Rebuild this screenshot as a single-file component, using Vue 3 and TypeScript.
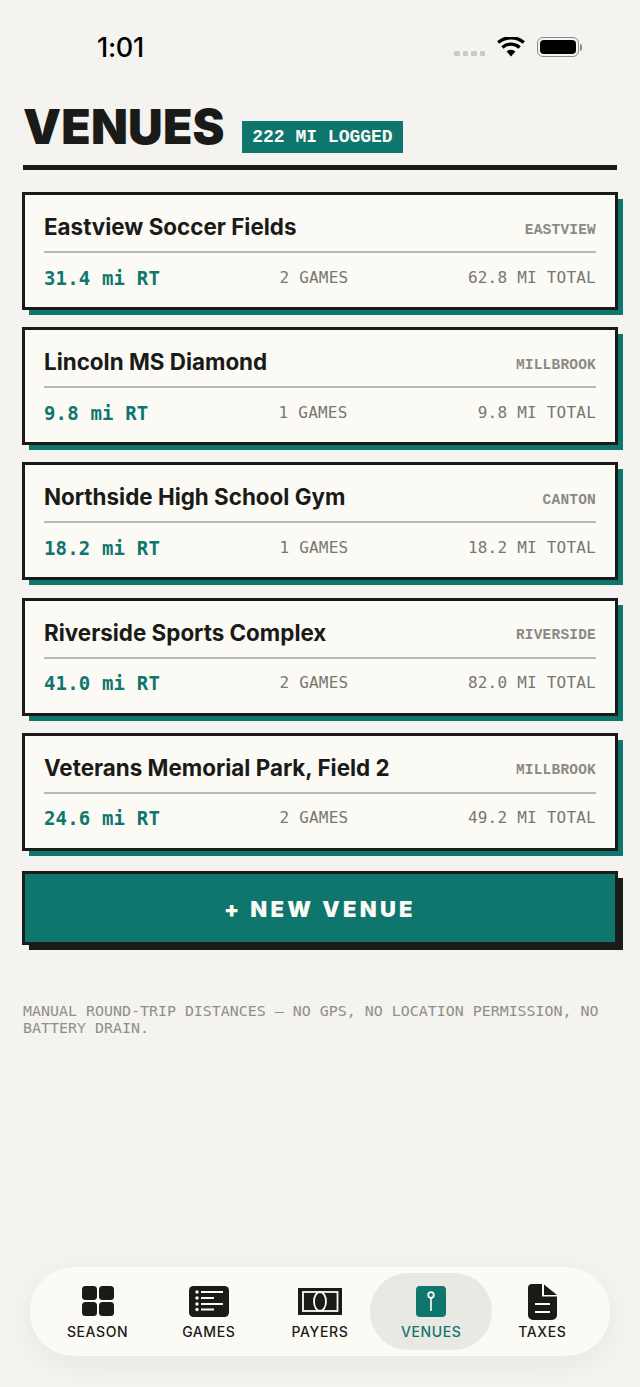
<script setup lang="ts">
interface Venue { name: string; town: string; rt: string; games: string; total: string }
const venues: Venue[] = [
  { name: 'Eastview Soccer Fields', town: 'EASTVIEW', rt: '31.4 mi RT', games: '2 GAMES', total: '62.8 MI TOTAL' },
  { name: 'Lincoln MS Diamond', town: 'MILLBROOK', rt: '9.8 mi RT', games: '1 GAMES', total: '9.8 MI TOTAL' },
  { name: 'Northside High School Gym', town: 'CANTON', rt: '18.2 mi RT', games: '1 GAMES', total: '18.2 MI TOTAL' },
  { name: 'Riverside Sports Complex', town: 'RIVERSIDE', rt: '41.0 mi RT', games: '2 GAMES', total: '82.0 MI TOTAL' },
  { name: 'Veterans Memorial Park, Field 2', town: 'MILLBROOK', rt: '24.6 mi RT', games: '2 GAMES', total: '49.2 MI TOTAL' },
]
</script>

<template>
  <div class="page">
    <div class="status">
      <span class="time">1:01</span>
      <div class="status-right">
        <div class="dots"><i></i><i></i><i></i><i></i></div>
        <svg class="wifi" width="28" height="20" viewBox="0 0 28 20">
          <path d="M14 19.5 9.6 14.4a6.6 6.6 0 0 1 8.8 0Z" fill="#000" />
          <path d="M5.4 10.4a12.8 12.8 0 0 1 17.2 0" fill="none" stroke="#000" stroke-width="3.4" />
          <path d="M1.2 5.6a19.2 19.2 0 0 1 25.6 0" fill="none" stroke="#000" stroke-width="3.4" />
        </svg>
        <div class="battery"><div class="battery-fill"></div></div>
        <div class="battery-tip"></div>
      </div>
    </div>

    <header class="head">
      <h1 class="title">VENUES</h1>
      <span class="badge">222 MI LOGGED</span>
    </header>

    <div class="list">
      <article v-for="v in venues" :key="v.name" class="card">
        <div class="card-top">
          <span class="name">{{ v.name }}</span>
          <span class="town">{{ v.town }}</span>
        </div>
        <div class="card-bottom">
          <span class="rt">{{ v.rt }}</span>
          <span class="games">{{ v.games }}</span>
          <span class="total">{{ v.total }}</span>
        </div>
      </article>
    </div>

    <button class="new">+ NEW VENUE</button>

    <p class="note">MANUAL ROUND-TRIP DISTANCES — NO GPS, NO LOCATION PERMISSION, NO BATTERY DRAIN.</p>

    <nav class="nav">
      <div class="tab">
        <svg width="32" height="36" viewBox="0 0 32 36">
          <rect x="0" y="2" width="15" height="14" rx="3.5" fill="#1a1a18" />
          <rect x="17" y="2" width="15" height="14" rx="3.5" fill="#1a1a18" />
          <rect x="0" y="18" width="15" height="14" rx="3.5" fill="#1a1a18" />
          <rect x="17" y="18" width="15" height="14" rx="3.5" fill="#1a1a18" />
        </svg>
        <span>SEASON</span>
      </div>
      <div class="tab">
        <svg width="40" height="36" viewBox="0 0 40 36">
          <rect x="0" y="2" width="40" height="31" rx="4.5" fill="#1a1a18" />
          <g fill="#fbfaf5">
            <circle cx="8" cy="8" r="1.7" /><circle cx="8" cy="14" r="1.7" /><circle cx="8" cy="20" r="1.7" /><circle cx="8" cy="25.5" r="1.7" />
            <rect x="12" y="7" width="22" height="2" /><rect x="12" y="13" width="13" height="2" /><rect x="12" y="19" width="22" height="2" /><rect x="12" y="24.5" width="13" height="2" />
          </g>
        </svg>
        <span>GAMES</span>
      </div>
      <div class="tab">
        <svg width="44" height="36" viewBox="0 0 44 36">
          <rect x="0" y="4" width="44" height="27" fill="#1a1a18" />
          <rect x="5" y="8" width="34.5" height="19" fill="none" stroke="#fbfaf5" stroke-width="1.8" />
          <ellipse cx="22" cy="17.5" rx="6" ry="9.5" fill="none" stroke="#fbfaf5" stroke-width="1.8" />
        </svg>
        <span>PAYERS</span>
      </div>
      <div class="tab active">
        <svg width="30" height="36" viewBox="0 0 30 36">
          <rect x="0" y="2" width="30" height="31" rx="4" fill="#0f766e" />
          <circle cx="15" cy="11" r="2.8" fill="#0f766e" stroke="#fbfaf5" stroke-width="1.8" />
          <path d="M15 14v13" stroke="#fbfaf5" stroke-width="1.7" />
        </svg>
        <span>VENUES</span>
      </div>
      <div class="tab">
        <svg width="29" height="36" viewBox="0 0 29 36">
          <path d="M4 0H14V12.5H29V31a5 5 0 0 1-5 5H5a5 5 0 0 1-5-5V4a4 4 0 0 1 4-4Z" fill="#1a1a18" />
          <path d="M16 .5 29 11H16Z" fill="#1a1a18" />
          <rect x="7" y="19" width="15" height="2" fill="#fbfaf5" />
          <rect x="7" y="27" width="15" height="2" fill="#fbfaf5" />
        </svg>
        <span>TAXES</span>
      </div>
    </nav>
  </div>
</template>

<style>
html, body { margin: 0; background: #f4f3ef; }
</style>

<style scoped>
.page {
  box-sizing: border-box;
  width: 640px;
  height: 1387px;
  background: #f4f3ef;
  display: flex;
  flex-direction: column;
  padding: 0 22px 31px;
  overflow: hidden;
  color: #1a1a18;
}
.status {
  height: 94px;
  display: flex;
  justify-content: space-between;
  align-items: flex-start;
  padding: 33px 36px 0 75px;
  box-sizing: border-box;
  flex: none;
}
.time {
  font: 500 27px/30px Inter, sans-serif;
  color: #000;
  letter-spacing: -0.3px;
}
.status-right { display: flex; align-items: center; height: 28px; }
.dots { display: flex; gap: 3px; margin: 13px 12px 0 0; }
.dots i { width: 5.5px; height: 5.5px; background: #c9c9c7; border-radius: 1px; }
.wifi { margin-right: 12px; }
.battery {
  box-sizing: border-box;
  width: 42px;
  height: 20px;
  border: 1.5px solid #8a8a88;
  border-radius: 6px;
  padding: 2px;
}
.battery-fill { height: 100%; background: #000; border-radius: 4px; }
.battery-tip { width: 2px; height: 7px; background: #8a8a88; border-radius: 0 2px 2px 0; margin-left: 1px; }

.head {
  flex: none;
  display: flex;
  align-items: flex-end;
  gap: 17.5px;
  margin: 0 1px 22px;
  padding-bottom: 12px;
  border-bottom: 5px solid #1a1a18;
  height: 59px;
}
.title {
  margin: 0;
  font: 900 48px/65px Inter, sans-serif;
  letter-spacing: 0.2px;
  height: 59px;
}
.badge {
  background: #0f766e;
  color: #fbfaf5;
  font: 700 18px/32px "Liberation Mono", monospace;
  padding: 0 10px;
  height: 32px;
}
.list { flex: none; display: flex; flex-direction: column; gap: 17.2px; }
.card {
  box-sizing: border-box;
  height: 118px;
  background: #fbfaf5;
  border: 3px solid #1a1a18;
  box-shadow: 6px 6px 0 -1px #0f766e;
  padding: 0 19px;
}
.card-top {
  height: 58px;
  border-bottom: 2px solid #b9b8b2;
  display: flex;
  justify-content: space-between;
  align-items: center;
  padding-top: 8px;
  box-sizing: border-box;
}
.name { font: 700 22.4px/26px Inter, sans-serif; }
.town { font: 700 14.5px/18px "Liberation Mono", monospace; color: #8a8a84; letter-spacing: 0.2px; margin-top: 5px; }
.card-bottom {
  display: flex;
  justify-content: space-between;
  align-items: center;
  height: 50px;
  padding-bottom: 1px;
  box-sizing: border-box;
}
.rt { font: 700 19px/22px "DejaVu Sans Mono", monospace; color: #0f766e; letter-spacing: 0.16px; }
.games, .total { font: 400 16px/20px "DejaVu Sans Mono", monospace; color: #777772; letter-spacing: 0.22px; }
.new {
  flex: none;
  margin-top: 20px;
  height: 74px;
  box-sizing: border-box;
  background: #0f766e;
  border: 3px solid #1a1a18;
  box-shadow: 6px 6px 0 -1px #1a1a18;
  color: #fbfaf5;
  font: 900 22px/1 Inter, sans-serif;
  letter-spacing: 3.3px;
  padding: 3px 0 0;
}
.note {
  flex: none;
  margin: 58px 1px 0;
  font: 400 14.95px/17.5px "DejaVu Sans Mono", monospace;
  color: #8f8f89;
}
.nav {
  flex: none;
  margin: auto 8px 0;
  height: 89px;
  box-sizing: border-box;
  background: #fbfaf5;
  border-radius: 44px;
  box-shadow: 0 8px 30px rgba(26, 26, 24, 0.06);
  display: grid;
  grid-template-columns: repeat(5, 111.2px);
  padding: 6px 0 6px 12px;
  align-items: stretch;
}
.tab {
  display: flex;
  flex-direction: column;
  align-items: center;
  justify-content: flex-end;
  gap: 3px;
  border-radius: 38px;
  font: 450 14px/18px Inter, sans-serif;
  letter-spacing: 0.6px;
  padding-bottom: 9px;
}
.tab svg { display: block; }
.tab.active { background: #e9e8e3; color: #0f766e; font-weight: 500; margin: 0 -5.5px; }
</style>
